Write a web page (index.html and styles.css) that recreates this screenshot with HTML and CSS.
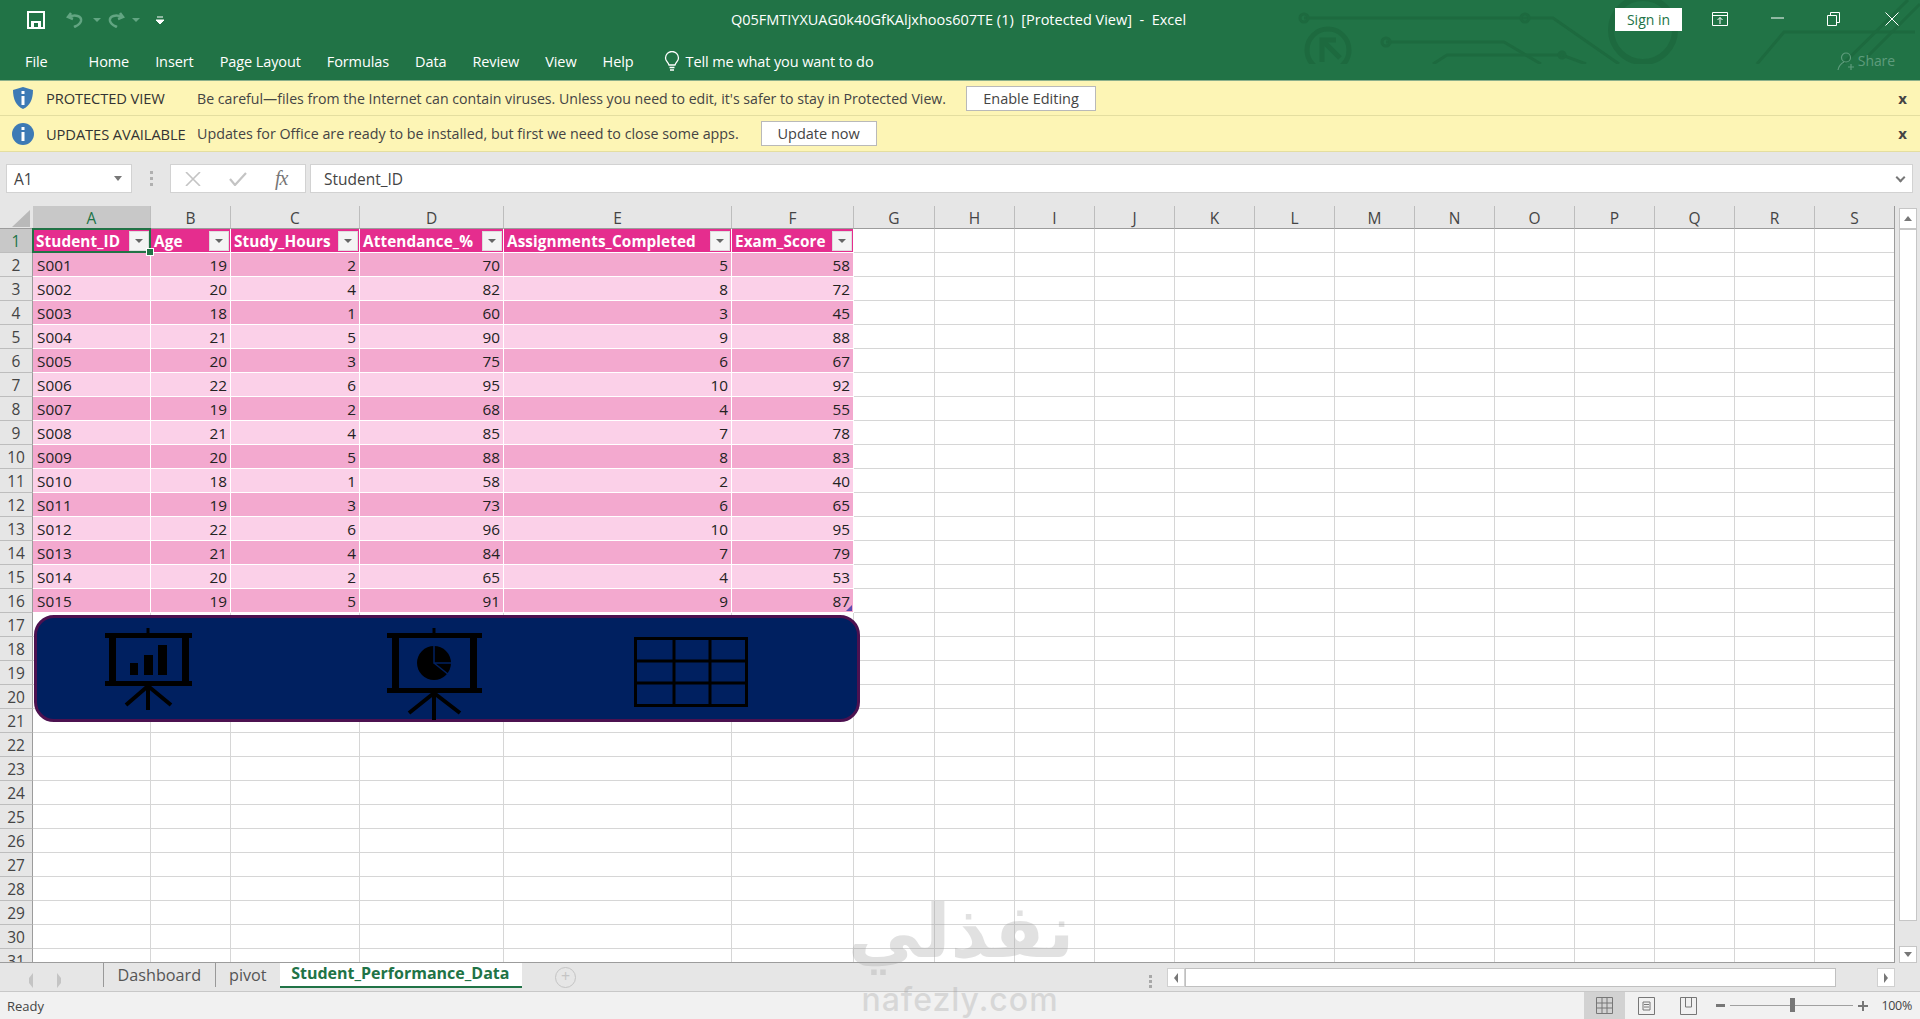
FILE: index.html
```html
<!DOCTYPE html>
<html lang="en">
<head>
    <meta charset="UTF-8">
    <title>Excel - Student Performance Data</title>
    <link rel="stylesheet" href="styles.css">
</head>
<body>
    <div class="top">
        <svg class="circuit" width="640" height="64" viewBox="1280 0 640 64">
            <g fill="none" stroke="#1d6a3f" stroke-width="3">
                <path d="M1304 18H1553L1619 64"/>
                <circle cx="1304" cy="18" r="4"/>
                <circle cx="1525" cy="18" r="4"/>
                <circle cx="1328" cy="50" r="21" stroke-width="5"/>
                <path d="M1322 62V40H1336M1322 40L1340 58" stroke-width="5"/>
                <path d="M1386 42H1504L1541 64"/>
                <circle cx="1386" cy="42" r="4"/>
                <path d="M1433 64L1447 55H1562L1586 64"/>
                <circle cx="1562" cy="55" r="3"/>
                <circle cx="1643" cy="30" r="32" stroke-width="6"/>
                <path d="M1757 64L1784 32H1915"/>
                <path d="M1843 64L1908 0M1860 64L1920 4"/>
            </g>
        </svg>
        <div class="titlebar">
            <div class="qat">
                <svg width="18" height="18" viewBox="0 0 18 18"><path d="M1 1H17V17H1Z" fill="none" stroke="#fff" stroke-width="2"/><path d="M4 10H14V17H4Z" fill="#fff"/><path d="M7 12H11V16H7Z" fill="#217346"/></svg>
                <svg class="dim" width="20" height="18" viewBox="0 0 20 18"><path d="M5 2L2 6L7 8M3 6C9 3 16 5 15 10C14 14 10 15 8 16" fill="none" stroke="#62a582" stroke-width="2.5"/></svg>
                <span class="caret-dim"></span>
                <svg class="dim" width="20" height="18" viewBox="0 0 20 18"><path d="M15 2L18 6L13 8M17 6C11 3 4 5 5 10C6 14 10 15 12 16" fill="none" stroke="#62a582" stroke-width="2.5"/></svg>
                <span class="caret-dim"></span>
                <svg class="customize" width="8" height="9" viewBox="0 0 8 9"><path d="M1 1H7M0 4H8L4 8Z" fill="#fff" stroke="#fff"/></svg>
            </div>
            <div class="doc-title">Q05FMTIYXUAG0k40GfKAljxhoos607TE (1)&nbsp; [Protected View]&nbsp; -&nbsp; Excel</div>
            <div class="win-controls">
                <button class="signin">Sign in</button>
                <svg class="ctl-ribbon" width="16" height="14" viewBox="0 0 16 14"><path d="M.5.5H15.5V13.5H.5ZM.5 3.5H15.5M8 12V5.5M5.5 8L8 5.5L10.5 8" fill="none" stroke="#fff"/></svg>
                <svg class="ctl-min" width="13" height="2" viewBox="0 0 13 2"><path d="M0 1H13" stroke="#fff"/></svg>
                <svg class="ctl-restore" width="13" height="14" viewBox="0 0 13 14"><path d="M.5 3.5H9.5V13.5H.5ZM3.5 3.5V.5H12.5V10.5H9.5" fill="none" stroke="#fff"/></svg>
                <svg class="ctl-close" width="14" height="14" viewBox="0 0 14 14"><path d="M.5.5L13.5 13.5M13.5.5L.5 13.5" stroke="#fff"/></svg>
            </div>
        </div>
        <div class="ribbon">
            <span class="tab-file">File</span>
            <span>Home</span>
            <span>Insert</span>
            <span>Page Layout</span>
            <span>Formulas</span>
            <span>Data</span>
            <span>Review</span>
            <span>View</span>
            <span>Help</span>
            <span class="tell">
                <svg width="16" height="21" viewBox="0 0 16 21"><path d="M5 14C4 11 1.500 10 1.500 7A6.500 6.500 0 0 1 14.500 7C14.500 10 12 11 11 14ZM5.500 16.500H10.500M6 19H10" fill="none" stroke="#fff" stroke-width="1.300"/></svg>
                Tell me what you want to do
            </span>
            <span class="share">
                <svg width="20" height="20" viewBox="0 0 20 20"><path d="M10 2A4.500 4.500 0 0 1 10 11A4.500 4.500 0 0 1 10 2ZM2 19C3 14 6 12 8 11M15 13V19M12 16H18" fill="none" stroke="#5e9c7c" stroke-width="1.200"/></svg>
                Share
            </span>
        </div>
    </div>

    <div class="msgbar">
        <svg class="msg-icon" width="22" height="24" viewBox="0 0 22 24"><path d="M11 1L21 4C21 13 18 20 11 23C4 20 1 13 1 4Z" fill="#3d7ab5"/><path d="M9.500 10H12.500V19H9.500ZM9.500 5H12.500V8H9.500Z" fill="#fff"/></svg>
        <b class="msg-title">PROTECTED VIEW</b>
        <span class="msg-text">Be careful—files from the Internet can contain viruses. Unless you need to edit, it's safer to stay in Protected View.</span>
        <button class="msg-btn btn-enable">Enable Editing</button>
        <span class="msg-close">x</span>
    </div>
    <div class="msgbar msgbar-second">
        <svg class="msg-icon" width="22" height="22" viewBox="0 0 22 22"><circle cx="11" cy="11" r="11" fill="#3d7ab5"/><path d="M9.500 9H12.500V18H9.500ZM9.500 4H12.500V7H9.500Z" fill="#fff"/></svg>
        <b class="msg-title">UPDATES AVAILABLE</b>
        <span class="msg-text">Updates for Office are ready to be installed, but first we need to close some apps.</span>
        <button class="msg-btn btn-update">Update now</button>
        <span class="msg-close">x</span>
    </div>

    <div class="formula-row">
        <div class="namebox">A1<i class="caret"></i></div>
        <div class="fdots"><i></i><i></i><i></i></div>
        <div class="fbtns">
            <svg width="16" height="14" viewBox="0 0 16 14"><path d="M1 0L15 14M15 0L1 14" stroke="#c4c4c4" stroke-width="1.600"/></svg>
            <svg width="18" height="14" viewBox="0 0 18 14"><path d="M1 7L6 13L17 1" fill="none" stroke="#c4c4c4" stroke-width="2.200"/></svg>
            <span class="fx">fx</span>
        </div>
        <div class="finput">Student_ID<i class="chev"></i></div>
    </div>

    <div class="workspace">
        <div class="sheet" id="sheet"></div>
        <div class="vscroll">
            <span class="sb-btn"><i class="tri-up"></i></span>
            <span class="sb-thumb"></span>
            <span class="sb-btn sb-down"><i class="tri-down"></i></span>
        </div>
        <div class="shape">
            <svg class="ico-bars" width="88" height="84" viewBox="15 8 88 84">
                <path d="M15 13H102V18H15ZM15 61H102V66H15ZM19 18H26V61H19ZM92 18H99V61H92ZM56.500 8H59.500V14H56.500ZM40 43H48V55H40ZM54 35H63V55H54ZM68 25H77V55H68Z"/>
                <path d="M58 66V90M58 66L36 85M58 66L81 85" fill="none" stroke="#000" stroke-width="4"/>
            </svg>
            <svg class="ico-pie" width="96" height="92" viewBox="12 8 96 92">
                <path d="M12 13H107V18H12ZM12 68H107V73H12ZM17 18H24V68H17ZM95 18H102V68H95ZM57.500 8H60.500V14H57.500Z"/>
                <circle cx="59" cy="43" r="17"/>
                <path d="M59 25V43H77M59 43L74 55" fill="none" stroke="#002060" stroke-width="1.500"/>
                <path d="M59 73V100M59 73L34 93M59 73L85 93" fill="none" stroke="#000" stroke-width="4"/>
            </svg>
            <svg class="ico-grid" width="114" height="70" viewBox="0 0 114 70">
                <path d="M1.500 1.500H112.500V68.500H1.500ZM40 1V69M76 1V69M1 24H113M1 46H113" fill="none" stroke="#000" stroke-width="3"/>
            </svg>
        </div>
        <div class="wm-ar" dir="rtl">نفذلي</div>
    </div>

    <div class="tabbar">
        <div class="tab-nav"><i class="tri-left"></i><i class="tri-right"></i></div>
        <span class="tab">Dashboard</span>
        <span class="tab">pivot</span>
        <span class="tab tab-active">Student_Performance_Data</span>
        <span class="tab-add">+</span>
        <div class="hdots"><i></i><i></i><i></i></div>
        <div class="hscroll">
            <span class="hs-btn"><i class="tri-left dark"></i></span>
            <span class="hs-thumb"></span>
            <span class="hs-btn hs-right"><i class="tri-right dark"></i></span>
        </div>
    </div>

    <div class="statusbar">
        <span class="ready">Ready</span>
        <div class="views">
            <span class="view view-on">
                <svg width="17" height="17" viewBox="0 0 17 17"><path d="M.5.5H16.500V16.500H.5ZM6 .5V16.500M11 .5V16.500M.5 6H16.500M.5 11H16.500" fill="none" stroke="#777"/></svg>
            </span>
            <span class="view">
                <svg width="17" height="18" viewBox="0 0 17 18"><path d="M.5.5H16.500V17.500H.5ZM5 5H12V13H5ZM6 7.500H11M6 10H11" fill="none" stroke="#777"/></svg>
            </span>
            <span class="view">
                <svg width="17" height="18" viewBox="0 0 17 18"><path d="M.5.5H16.500V17.500H.5ZM5.500.5V10H11.500V.5" fill="none" stroke="#777"/></svg>
            </span>
        </div>
        <div class="zoom">
            <i class="z-minus"></i>
            <div class="z-track"><i class="z-thumb"></i></div>
            <i class="z-plus"></i>
            <span class="z-val">100%</span>
        </div>
    </div>
    <div class="wm-en">nafezly.com</div>

    <script src="script.js"></script>
</body>
</html>
```

FILE: styles.css
```css
* {
    box-sizing: border-box;
}
html, body {
    margin: 0;
    height: 1019px;
    overflow: hidden;
}
body {
    position: relative;
    background-color: #e6e6e6;
    font-family: "Open Sans", sans-serif;
    color: #444;
}
button {
    font-family: inherit;
}
i {
    display: block;
}

/* title bar + ribbon tabs */
.top {
    position: relative;
    height: 81px;
    background-color: #217346;
    color: white;
    border-bottom: 1px solid #8bb08c;
}
.circuit {
    position: absolute;
    top: 0;
    left: 1280px;
}
.titlebar {
    position: relative;
    height: 40px;
    display: flex;
    align-items: center;
}
.qat {
    width: 320px;
    padding-left: 27px;
    display: flex;
    align-items: center;
}
.qat svg {
    flex: none;
}
.qat .dim {
    margin-left: 21px;
}
.qat .dim + .caret-dim + .dim {
    margin-left: 4px;
}
.caret-dim {
    margin-left: 7px;
    border-left: 4px solid transparent;
    border-right: 4px solid transparent;
    border-top: 4px solid #62a582;
}
.customize {
    margin-left: 16px;
}
.doc-title {
    flex: 1;
    text-align: center;
    font-size: 14.500px;
    margin-top: -2px;
    padding-right: 18px;
    white-space: nowrap;
}
.win-controls {
    width: 305px;
    height: 40px;
    display: flex;
    align-items: center;
    position: relative;
}
.signin {
    height: 23px;
    width: 67px;
    margin-top: -1px;
    margin-left: 0;
    background-color: white;
    color: #217346;
    border: none;
    font-size: 14px;
    padding: 0;
}
.ctl-ribbon {
    margin-left: 30px;
    margin-top: -2px;
}
.ctl-min {
    margin-left: 43px;
    margin-top: -4px;
}
.ctl-restore {
    margin-left: 43px;
    margin-top: -2px;
}
.ctl-close {
    margin-left: 45px;
    margin-top: -2px;
}
.ribbon {
    position: relative;
    height: 40px;
    padding: 3px 25px 0 25px;
    display: flex;
    align-items: center;
    gap: 26px;
    font-size: 14.500px;
    letter-spacing: -0.1px;
    white-space: nowrap;
}
.tab-file {
    margin-right: 15px;
}
.tell {
    display: flex;
    align-items: center;
    gap: 6px;
    margin-left: 4px;
}
.share {
    margin-left: auto;
    display: flex;
    align-items: center;
    gap: 2px;
    color: #5e9c7c;
    font-size: 14px;
    margin-top: -2px;
}

/* message bars */
.msgbar {
    height: 35px;
    background-color: #fdf5b5;
    border-bottom: 1px solid #e4dea0;
    padding: 0 12px;
    display: flex;
    align-items: center;
    font-size: 14.150px;
    white-space: nowrap;
}
.msgbar-second {
    height: 36px;
    font-size: 14.300px;
}
.msg-icon {
    flex: none;
    width: 22px;
}
.msg-title {
    width: 151px;
    margin-left: 12px;
    font-weight: 400;
    color: #333;
    font-size: 14.700px;
    letter-spacing: -0.1px;
}
.msg-btn {
    height: 25px;
    background-color: white;
    border: 1px solid #b9b9b9;
    color: #444;
    font-size: 14.500px;
    padding: 0;
}
.btn-enable {
    width: 130px;
    margin-left: 20px;
}
.btn-update {
    width: 116px;
    margin-left: 22px;
}
.msg-close {
    margin-left: auto;
    font-weight: 700;
    font-size: 15px;
    padding-right: 1px;
    line-height: 1;
}

/* formula bar */
.formula-row {
    height: 54px;
    padding: 12px 7px 13px 6px;
    display: flex;
}
.namebox, .fbtns, .finput {
    background-color: white;
    border: 1px solid #d2d2d2;
    display: flex;
    align-items: center;
    font-size: 15.500px;
}
.namebox {
    width: 126px;
    padding: 0 9px 0 7px;
    justify-content: space-between;
}
.caret {
    border-left: 4px solid transparent;
    border-right: 4px solid transparent;
    border-top: 5px solid #777;
}
.fdots {
    width: 38px;
    display: flex;
    flex-direction: column;
    align-items: center;
    justify-content: center;
    gap: 3px;
}
.fdots i {
    width: 3px;
    height: 3px;
    background-color: #b0b0b0;
}
.fbtns {
    width: 136px;
    padding-left: 14px;
    gap: 28px;
}
.fx {
    font-family: "Liberation Serif", serif;
    font-style: italic;
    font-size: 20px;
    color: #777;
    letter-spacing: -1px;
}
.finput {
    flex: 1;
    margin-left: 4px;
    padding: 0 8px 0 13px;
    justify-content: space-between;
}
.chev {
    width: 7px;
    height: 7px;
    border-right: 2px solid #777;
    border-bottom: 2px solid #777;
    transform: rotate(45deg);
    margin-top: -3px;
}

/* sheet */
.workspace {
    position: relative;
    height: 757px;
    display: flex;
}
.sheet {
    width: 1895px;
    height: 757px;
    overflow: hidden;
    display: grid;
    grid-template-columns: 33px 118px 80px 129px 144px 228px 122px 81px repeat(12, 80px);
    grid-auto-rows: 24px;
    grid-template-rows: 23px;
    align-content: start;
    background-color: white;
    border-bottom: 1px solid #9c9c9c;
    border-right: 1px solid #9c9c9c;
}
.corner {
    background-color: #e6e6e6;
    border-bottom: 1px solid #9c9c9c;
    position: relative;
}
.corner::after {
    content: "";
    position: absolute;
    left: 12px;
    top: 4px;
    width: 18px;
    height: 17px;
    background-color: #b9b9b9;
    clip-path: polygon(100% 0, 100% 100%, 0 100%);
}
.colhead, .rowhead {
    background-color: #e6e6e6;
    display: flex;
    align-items: center;
    justify-content: center;
    font-size: 15.500px;
    color: #444;
    padding-top: 1px;
}
.colhead {
    border-right: 1px solid #bdbdbd;
    border-bottom: 1px solid #9c9c9c;
}
.rowhead {
    border-bottom: 1px solid #bdbdbd;
    border-right: 1px solid #9c9c9c;
}
.colhead.on, .rowhead.on {
    background-color: #c8c8c8;
    color: #217346;
}
.cell {
    border-right: 1px solid #d6d6d6;
    border-bottom: 1px solid #d6d6d6;
    font-size: 15.300px;
    color: #222;
    padding: 0 3px 0 4px;
    display: flex;
    align-items: center;
    white-space: nowrap;
    position: relative;
}
.cell.num {
    justify-content: flex-end;
}
.band {
    border-color: white;
}
.band-dark {
    background-color: #f3a9cf;
}
.band-light {
    background-color: #fbd0e8;
}
.th {
    background-color: #e52d8e;
    border-color: white;
    color: white;
    font-weight: 700;
    justify-content: space-between;
    padding-left: 3px;
    padding-right: 1px;
    letter-spacing: 0.1px;
}
.filter {
    flex: none;
    width: 20px;
    height: 20px;
    background-color: #f4f4f4;
    border: 1px solid #ddd;
    display: flex;
    align-items: center;
    justify-content: center;
}
.filter::after {
    content: "";
    border-left: 4px solid transparent;
    border-right: 4px solid transparent;
    border-top: 4px solid #666;
}
.selected::after {
    content: "";
    position: absolute;
    inset: -1px -1px -1px -1px;
    border: 2px solid #217346;
}
.selected::before {
    content: "";
    position: absolute;
    right: -4px;
    bottom: -4px;
    width: 6px;
    height: 6px;
    background-color: #217346;
    border: 1px solid white;
    z-index: 2;
}
.table-end::after {
    content: "";
    position: absolute;
    right: 1px;
    bottom: 1px;
    width: 6px;
    height: 6px;
    background-color: #5b4bb0;
    clip-path: polygon(100% 0, 100% 100%, 0 100%);
}

/* rounded shape sitting over the grid */
.shape {
    position: absolute;
    left: 34px;
    top: 409px;
    width: 826px;
    height: 107px;
    background-color: #002060;
    border: 3px solid #4c1150;
    border-radius: 20px;
    display: flex;
    align-items: flex-start;
}
.ico-bars {
    margin-left: 68px;
    margin-top: 10px;
}
.ico-pie {
    margin-left: 194px;
    margin-top: 10px;
}
.ico-grid {
    margin-left: 151px;
    margin-top: 19px;
}

/* vertical scrollbar */
.vscroll {
    width: 25px;
    height: 757px;
    padding: 2px 3px 0 4px;
    display: flex;
    flex-direction: column;
    background-color: #e6e6e6;
}
.sb-btn {
    flex: none;
    height: 21px;
    background-color: white;
    border: 1px solid #c6c6c6;
    display: flex;
    align-items: center;
    justify-content: center;
}
.sb-down {
    margin-top: auto;
    height: 17px;
}
.sb-thumb {
    height: 692px;
    background-color: white;
    border: 1px solid #c6c6c6;
}
.tri-up, .tri-down {
    border-left: 4px solid transparent;
    border-right: 4px solid transparent;
}
.tri-up {
    border-bottom: 5px solid #777;
}
.tri-down {
    border-top: 5px solid #777;
}
.tri-left, .tri-right {
    border-top: 5px solid transparent;
    border-bottom: 5px solid transparent;
}
.tri-left {
    border-right: 4px solid #c4c4c4;
}
.tri-right {
    border-left: 4px solid #c4c4c4;
}
.tri-left.dark {
    border-right-color: #777;
}
.tri-right.dark {
    border-left-color: #777;
}

/* sheet tabs */
.tabbar {
    height: 29px;
    display: flex;
    align-items: flex-start;
    border-bottom: 1px solid #c8c8c8;
}
.tab-nav {
    width: 103px;
    height: 25px;
    padding: 10px 0 0 29px;
    display: flex;
    gap: 24px;
    flex: none;
}
.tab {
    height: 24px;
    display: flex;
    align-items: center;
    font-size: 16.200px;
    color: #555;
    border-left: 1px solid #999;
    padding: 0 13.500px;
    white-space: nowrap;
}
.tab-active {
    height: 25px;
    width: 242px;
    padding: 0 0 3px 11px;
    border-left: none;
    background-color: white;
    color: #217346;
    font-weight: 700;
    font-size: 16px;
    border-bottom: 2px solid #217346;
}
.tab-add {
    width: 21px;
    height: 21px;
    margin: 4px 0 0 33px;
    border: 1px solid #c4c4c4;
    border-radius: 50%;
    color: #c4c4c4;
    font-size: 16px;
    line-height: 17px;
    text-align: center;
}
.hdots {
    margin: 12px 0 0 573px;
    display: flex;
    flex-direction: column;
    gap: 2px;
}
.hdots i {
    width: 3px;
    height: 3px;
    background-color: #a8a8a8;
}
.hscroll {
    margin: 5px 0 0 15px;
    width: 728px;
    height: 19px;
    display: flex;
}
.hs-btn {
    width: 18px;
    height: 19px;
    background-color: white;
    border: 1px solid #d0d0d0;
    display: flex;
    align-items: center;
    justify-content: center;
    flex: none;
}
.hs-thumb {
    width: 651px;
    background-color: white;
    border: 1px solid #c0c0c0;
}
.hs-right {
    margin-left: auto;
}

/* status bar */
.statusbar {
    height: 27px;
    background-color: #f1f1f1;
    display: flex;
    align-items: center;
    font-size: 13px;
    padding-left: 7px;
}
.ready {
    color: #444;
}
.views {
    margin-left: auto;
    margin-right: 7px;
    display: flex;
    height: 27px;
    align-items: center;
}
.view {
    width: 41px;
    height: 27px;
    display: flex;
    align-items: center;
    justify-content: center;
}
.view + .view {
    width: 42px;
}
.view-on {
    background-color: #d2d2d2;
}
.zoom {
    display: flex;
    align-items: center;
    padding: 0 8px 0 0;
    height: 27px;
}
.z-minus {
    width: 9px;
    height: 3px;
    background-color: #777;
}
.z-track {
    width: 123px;
    height: 1px;
    background-color: #a0a0a0;
    margin: 0 5px;
    position: relative;
}
.z-thumb {
    position: absolute;
    left: 60px;
    top: -7px;
    width: 5px;
    height: 14px;
    background-color: #777;
}
.z-plus {
    width: 10px;
    height: 10px;
    background:
        linear-gradient(#777, #777) center / 10px 2px no-repeat,
        linear-gradient(#777, #777) center / 2px 10px no-repeat;
}
.z-val {
    margin-left: 13px;
    font-size: 12.500px;
    letter-spacing: -0.3px;
}

/* watermark */
.wm-ar, .wm-en {
    position: absolute;
    color: #9e9e9e;
    opacity: 0.3;
    font-weight: 700;
    pointer-events: none;
    white-space: nowrap;
}
.wm-ar {
    left: 845px;
    top: 680px;
    width: 232px;
    font-family: "DejaVu Sans", sans-serif;
    font-size: 74px;
    line-height: 90px;
    text-align: center;
}
.wm-en {
    left: 860px;
    top: 979px;
    width: 200px;
    text-align: center;
    font-family: "Inter", sans-serif;
    font-weight: 500;
    font-size: 32px;
    line-height: 42px;
    letter-spacing: 1px;
}
```

FILE: script.js
```js
const columns = ['A', 'B', 'C', 'D', 'E', 'F', 'G', 'H', 'I', 'J', 'K', 'L', 'M', 'N', 'O', 'P', 'Q', 'R', 'S'];
const headers = ['Student_ID', 'Age', 'Study_Hours', 'Attendance_%', 'Assignments_Completed', 'Exam_Score'];
const students = [
    ['S001', 19, 2, 70, 5, 58],
    ['S002', 20, 4, 82, 8, 72],
    ['S003', 18, 1, 60, 3, 45],
    ['S004', 21, 5, 90, 9, 88],
    ['S005', 20, 3, 75, 6, 67],
    ['S006', 22, 6, 95, 10, 92],
    ['S007', 19, 2, 68, 4, 55],
    ['S008', 21, 4, 85, 7, 78],
    ['S009', 20, 5, 88, 8, 83],
    ['S010', 18, 1, 58, 2, 40],
    ['S011', 19, 3, 73, 6, 65],
    ['S012', 22, 6, 96, 10, 95],
    ['S013', 21, 4, 84, 7, 79],
    ['S014', 20, 2, 65, 4, 53],
    ['S015', 19, 5, 91, 9, 87],
];

const sheet = document.getElementById('sheet');

function addCell(className, text) {
    const div = document.createElement('div');
    div.className = className;
    if (text !== undefined) div.textContent = text;
    sheet.appendChild(div);
    return div;
}

addCell('corner');
columns.forEach((letter, i) => addCell(i === 0 ? 'colhead on' : 'colhead', letter));

for (let row = 1; row <= 31; row++) {
    addCell(row === 1 ? 'rowhead on' : 'rowhead', row);
    columns.forEach((letter, col) => {
        if (row === 1 && col < headers.length) {
            const th = addCell(col === 0 ? 'cell th selected' : 'cell th', headers[col]);
            th.appendChild(document.createElement('span')).className = 'filter';
        } else if (row > 1 && row <= 16 && col < headers.length) {
            const band = row % 2 === 0 ? 'band-dark' : 'band-light';
            let cls = `cell band ${band}`;
            if (col > 0) cls += ' num';
            if (row === 16 && col === 5) cls += ' table-end';
            addCell(cls, students[row - 2][col]);
        } else {
            addCell('cell');
        }
    });
}
```
